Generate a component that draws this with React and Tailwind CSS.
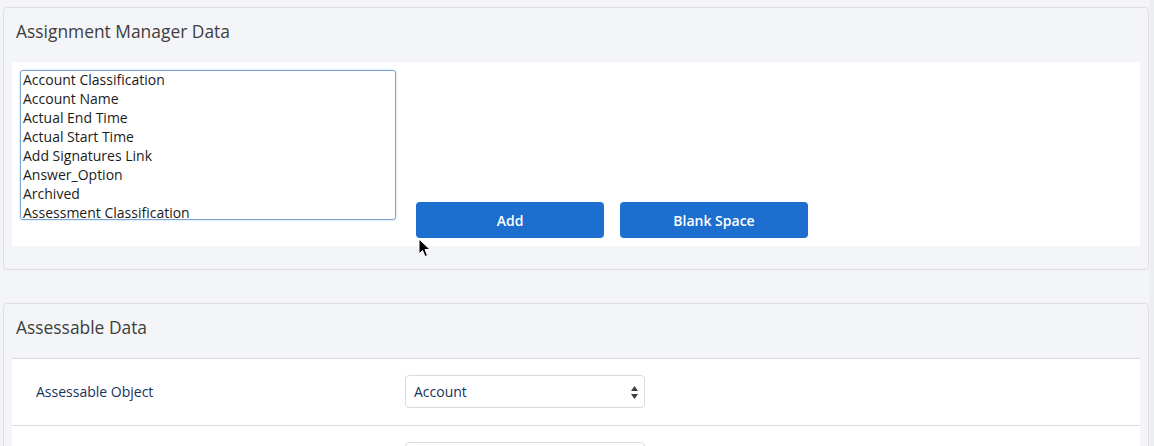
import React from "react";

const fields = [
  "Account Classification",
  "Account Name",
  "Actual End Time",
  "Actual Start Time",
  "Add Signatures Link",
  "Answer_Option",
  "Archived",
  "Assessment Classification",
];

function Card({ title, children, className = "" }) {
  return (
    <div className={"rounded-[4px] border border-[#dddde2] bg-[#f4f5f9] " + className}>
      <div className="h-[54px] px-3 pt-[12px] text-[17.4px] leading-[23px] text-[#3e3e3c]">{title}</div>
      <div className="mx-2">{children}</div>
    </div>
  );
}

function SelectBox({ value }) {
  return (
    <div className="relative flex h-[33px] w-[240px] items-center rounded-[4px] border border-[#dddbda] bg-white pb-[1px] pl-2 text-[14px] text-[#16325c]">
      {value}
      <svg className="absolute right-[6px] top-[10px]" width="7" height="13" viewBox="0 0 7 13">
        <path d="M3.5 0 L7 5 L0 5 Z" fill="#3e3e3c" />
        <path d="M3.5 13 L7 8 L0 8 Z" fill="#3e3e3c" />
      </svg>
    </div>
  );
}

export default function App() {
  return (
    <div
      className="relative h-[446px] w-[1154px] overflow-hidden border-r-[4px] border-[#eceef2] bg-[#f4f5f9] pl-[3px] pr-[1px] pt-[7px]"
      style={{ fontFamily: '"Open Sans", Arial, sans-serif' }}
    >
      <Card title="Assignment Manager Data" className="pb-[23px]">
        <div className="flex h-[184px] bg-white p-2">
          <div className="h-[150px] w-[376px] overflow-hidden rounded-[3px] border border-[#7ca3d6] px-[2px] text-[14px] leading-[19px] text-[#1b1b1b] shadow-[0_0_2px_#a9c4ea]">
            <div className="-mt-px">
              {fields.map((f) => (
                <div key={f} className="whitespace-nowrap">{f}</div>
              ))}
            </div>
          </div>
          <div className="ml-5 flex gap-4 self-end">
            <button className="h-[36px] w-[188px] rounded-[4px] bg-[#1c6ecf] text-[14px] font-semibold text-white">
              Add
            </button>
            <button className="h-[36px] w-[188px] rounded-[4px] bg-[#1c6ecf] text-[14px] font-semibold text-white">
              Blank Space
            </button>
          </div>
        </div>
      </Card>

      <Card title="Assessable Data" className="mt-[33px]">
        <div className="bg-white">
          <div className="flex h-[67px] items-center border-t border-[#dddbda] pb-[1px] pl-6 text-[14px] text-[#16325c]">
            <div className="w-[369px] pb-[1px]">Assessable Object</div>
            <SelectBox value="Account" />
          </div>
          <div className="flex h-[67px] items-start border-t border-[#dddbda] pl-6 pt-4 text-[14px] text-[#16325c]">
            <div className="w-[369px]"></div>
            <SelectBox value="" />
          </div>
        </div>
      </Card>

      <svg className="absolute left-[418px] top-[238px]" width="13" height="20" viewBox="0 0 13 20">
        <path d="M1 1 L1 16 L4.5 12.5 L7 18.5 L9.5 17.5 L7 11.5 L12 11.5 Z" fill="#000" stroke="#fff" strokeWidth="1" />
      </svg>
    </div>
  );
}
